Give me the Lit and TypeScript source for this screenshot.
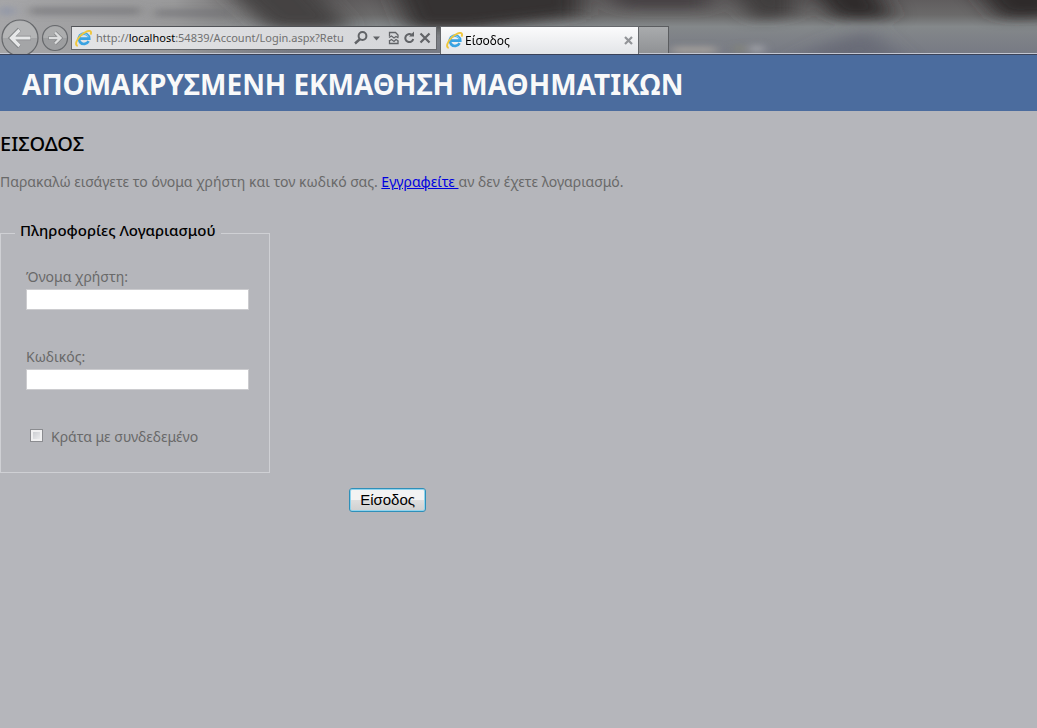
import { LitElement, html, css } from "lit";
import { customElement, property } from "lit/decorators.js";

const ieLogo = html`<svg width="17" height="17" viewBox="0 0 17 17" aria-hidden="true">
  <path d="M13.600 11.200a5.200 5.200 0 1 1 .6-2.600H5.200" fill="none" stroke="#3aa3e2" stroke-width="2.700"/>
  <path d="M13.400 7.200a5 5 0 0 0-9-1.200" fill="none" stroke="#8ad4f5" stroke-width="1"/>
  <path d="M2.800 15.800C-.6 15.400 1.400 9.600 5.800 5.400 10 1.600 14.600-.2 15.800 1.600c.4.8.2 2-.3 3" fill="none" stroke="#efc63c" stroke-width="1.900"/>
</svg>`;

@customElement("browser-bar")
export class BrowserBar extends LitElement {
  @property() pageTitle = "";

  static styles = css`
    :host { display: block; font-family: "Noto Sans", "Open Sans", sans-serif; font-size: 11px; }
    * { box-sizing: border-box; }
    .bar {
      position: relative;
      overflow: hidden;
      display: flex;
      align-items: flex-end;
      height: 55px;
      border-bottom: 1px solid #3a4258;
      box-shadow: inset 0 -1px #c3c7d2;
      background: #77797d;
    }
    .glass { position: absolute; inset: 0 0 2px 0; width: 100%; height: 53px; }
    .nav { position: relative; display: flex; align-items: center; width: 71px; height: 36px; flex: none; }
    .round { padding: 0; border: 0; background: none; display: block; line-height: 0; }
    .address {
      position: relative;
      display: flex;
      align-items: center;
      flex: none;
      width: 366px;
      height: 24px;
      margin-bottom: 4px;
      padding: 0 4px 0 3px;
      border: 1px solid #66686c;
      border-top-color: #505256;
      background: linear-gradient(90deg, #e3e4e6, #d4d5d8);
    }
    .url { flex: 1; margin-left: 4px; white-space: nowrap; color: #707070; line-height: 18px; }
    .url b { color: #000; font-weight: 400; }
    .tools { display: block; flex: none; }
    .tab {
      position: relative;
      display: flex;
      align-items: center;
      flex: none;
      width: 199px;
      height: 28px;
      margin-left: 3px;
      padding: 0 5px;
      border: 1px solid #66686c;
      border-bottom: 0;
      background: linear-gradient(#fbfbfc, #e3e5e8);
      color: #000;
    }
    .name { flex: 1; margin-left: 2px; font-size: 12px; line-height: 18px; }
    .fresh {
      position: relative;
      width: 30px;
      height: 27px;
      margin-bottom: 1px;
      padding: 0;
      border: 1px solid #5b5d60;
      border-left: 0;
      border-bottom: 0;
      border-radius: 0;
      background: linear-gradient(#a9abad, #909295);
    }
  `;

  render() {
    return html`<div class="bar">
      <svg class="glass" viewBox="0 0 1037 53" preserveAspectRatio="none" aria-hidden="true">
        <defs>
          <linearGradient id="v" x1="0" y1="0" x2="0" y2="1">
            <stop offset="0" stop-color="#605d5e"/><stop offset=".28" stop-color="#6b6a6a"/>
            <stop offset=".5" stop-color="#84888a"/><stop offset="1" stop-color="#777a84"/>
          </linearGradient>
          <linearGradient id="h" x1="0" x2="1">
            <stop offset="0" stop-color="#a6a6a8"/><stop offset=".6" stop-color="#99999a"/><stop offset="1" stop-color="#909091" stop-opacity="0"/>
          </linearGradient>
          <filter id="soft" x="-20%" y="-60%" width="140%" height="220%"><feGaussianBlur stdDeviation="12 6"/></filter>
          <filter id="fine" x="-20%" y="-60%" width="140%" height="220%"><feGaussianBlur stdDeviation="6 3"/></filter>
        </defs>
        <rect width="1037" height="53" fill="url(#v)"/>
        <rect width="290" height="53" fill="url(#h)"/>
        <g filter="url(#soft)">
          <path d="M222-14H312L350 28H270Z" fill="#444243"/>
          <path d="M390-20H580V15L470 28H410Z" fill="#353233"/>
          <path d="M600-18H710V8H620Z" fill="#444142"/>
          <path d="M725-18H795V14L755 20Z" fill="#403c3d"/>
          <path d="M805-18H870L892 18H835Z" fill="#2f2b2c"/>
          <path d="M870 30L905 62H790L830 42Z" fill="#626572" opacity=".7"/>
          <path d="M970-18H1060V16L1000 18Z" fill="#2f2b2c"/>
        </g>
        <g filter="url(#fine)" fill="none">
          <path d="M30 11H140M155 13H232" stroke="#6f7073" stroke-width="7" opacity=".7"/>
          <path d="M0 11H14" stroke="#8992a8" stroke-width="6"/>
          <path d="M672 50H716" stroke="#aaa59f" stroke-width="6"/>
          <path d="M736 49H744" stroke="#8c8c74" stroke-width="6"/>
          <path d="M752 49H762" stroke="#b0b1b6" stroke-width="7"/>
        </g>
      </svg>
      <div class="nav">
        <button class="round" aria-label="Πίσω">
          <svg width="40" height="36" viewBox="0 -1 40 36">
            <circle cx="20" cy="19" r="18" fill="#a4a5a7" stroke="#66686b" stroke-width="1.200"/>
            <path d="M3 19a17 17 0 0 1 34 0Z" fill="#b4b5b6"/>
            <path d="M31 19H12M19.500 10.500L11 19l8.500 8.500" fill="none" stroke="#838587" stroke-width="4.600"/>
            <path d="M30.500 19H12M19.500 11L11.500 19l8 8" fill="none" stroke="#e6e7e8" stroke-width="3.200"/>
          </svg>
        </button>
        <button class="round" aria-label="Εμπρός">
          <svg width="29" height="36" viewBox="0 -1 29 36">
            <circle cx="15" cy="19" r="12.500" fill="#9d9ea0" stroke="#67696c" stroke-width="1.200"/>
            <path d="M3.500 19a11.500 11.500 0 0 1 23 0Z" fill="#acadae"/>
            <path d="M8.500 19H20M15 13.500l5.500 5.500-5.500 5.500" fill="none" stroke="#808284" stroke-width="3.800"/>
            <path d="M9 19H20M15 13.500l5.500 5.500-5.500 5.500" fill="none" stroke="#dcddde" stroke-width="2.400"/>
          </svg>
        </button>
      </div>
      <div class="address">
        ${ieLogo}
        <span class="url">http://<b>localhost</b>:54839/Account/Login.aspx?Retu</span>
        <svg class="tools" width="78" height="18" viewBox="0 0 78 18" fill="none" stroke="#616367" aria-hidden="true">
          <circle cx="8.500" cy="7" r="3.900" stroke-width="2"/>
          <path d="M6 10L1 14.500" stroke-width="2.400"/>
          <path d="M19 7.500h7l-3.500 4Z" fill="#616367" stroke="none"/>
          <path d="M35.500 7.500V3.500h6l2.500 2.500v2M35.500 11.500v3h8.500V12" stroke-width="1.300"/>
          <path d="M35 8.500l2.500-1.500 2.500 2 2-1.500 2.500 1.500M35 12l2.500-1.500 2.500 2 2-2 2.500 1.500" stroke-width="1.200"/>
          <path d="M57.500 5.700A4 4 0 1 0 59.200 10" stroke-width="2"/>
          <path d="M55 7.500H60V2.500Z" fill="#616367" stroke="none"/>
          <path d="M66.500 4.500l9 9M75.500 4.500l-9 9" stroke-width="2.200"/>
        </svg>
      </div>
      <div class="tab">
        ${ieLogo}
        <span class="name">${this.pageTitle}</span>
        <svg width="9" height="9" viewBox="0 0 9 9" aria-hidden="true"><path d="M1 1l7 7M8 1L1 8" stroke="#929498" stroke-width="2.200"/></svg>
      </div>
      <button class="fresh" aria-label="Νέα καρτέλα"></button>
    </div>`;
  }
}

@customElement("login-form")
export class LoginForm extends LitElement {
  static styles = css`
    :host { display: block; color: #696969; }
    * { box-sizing: border-box; }
    .account {
      width: 270px;
      margin: 0;
      padding: 21px 20px 25px 25px;
      border: 1px solid #cfd0d4;
    }
    .legend { margin-left: -11px; padding: 0 5px 6px; color: #000; font-size: 15px; font-weight: 500; line-height: 20px; }
    .field { display: flex; flex-direction: column; gap: 2px; margin-bottom: 37px; line-height: 20px; }
    .box { width: 100%; height: 21px; padding: 0 3px; border: 1px solid #cccccf; background: #fff; font: inherit; }
    .keep { display: flex; align-items: center; gap: 8px; line-height: 20px; }
    .tick {
      appearance: none;
      width: 13px;
      height: 13px;
      margin: 0 0 4px 4px;
      border: 1px solid #8b8c90;
      background: linear-gradient(135deg, #c3c6cb, #f4f4f5);
      box-shadow: inset 0 0 0 2px #f0f0f1;
    }
    .tick:checked { background: #2a5c9a; }
    .actions { display: flex; width: 426px; justify-content: flex-end; padding-top: 15px; }
    .submit {
      height: 24px;
      padding: 0 10px;
      border: 1px solid #2f8fb8;
      border-radius: 3px;
      box-shadow: inset 0 0 0 1px #8fd4ee;
      background: linear-gradient(#f3f3f3 0 48%, #dedede 52%, #d0d0d0);
      color: #000;
      font: 15px "Liberation Sans", Arial, sans-serif;
      line-height: 20px;
    }
  `;

  render() {
    return html`<form @submit=${(e: Event) => e.preventDefault()}>
      <fieldset class="account">
        <legend class="legend">Πληροφορίες Λογαριασμού</legend>
        <div class="field">
          <label for="user">Όνομα χρήστη:</label>
          <input class="box" id="user" type="text" />
        </div>
        <div class="field">
          <label for="pass">Κωδικός:</label>
          <input class="box" id="pass" type="password" />
        </div>
        <div class="keep">
          <input class="tick" id="keep" type="checkbox" />
          <label for="keep">Κράτα με συνδεδεμένο</label>
        </div>
      </fieldset>
      <div class="actions"><button class="submit" type="submit">Είσοδος</button></div>
    </form>`;
  }
}

@customElement("app-root")
export class AppRoot extends LitElement {
  static styles = css`
    :host {
      display: block;
      min-height: 100vh;
      background: #b5b6bb;
      color: #696969;
      font-family: "Noto Sans", "Open Sans", sans-serif;
      font-size: 14px;
    }
    .banner { padding: 9px 22px 7px; background: #4b6c9e; }
    .site { margin: 0; color: #f9f9f9; font-size: 28px; font-weight: 700; line-height: 40px; }
    .heading { margin: 0; padding-top: 21px; color: #000; font-size: 20px; font-weight: 500; line-height: 24px; }
    .intro { margin: 0; padding: 16px 0 28px; line-height: 20px; }
    .link { color: #0000e0; }
  `;

  render() {
    return html`
      <browser-bar pageTitle="Είσοδος"></browser-bar>
      <header class="banner"><h1 class="site">ΑΠΟΜΑΚΡΥΣΜΕΝΗ ΕΚΜΑΘΗΣΗ ΜΑΘΗΜΑΤΙΚΩΝ</h1></header>
      <main>
        <h2 class="heading">ΕΙΣΟΔΟΣ</h2>
        <p class="intro">Παρακαλώ εισάγετε το όνομα χρήστη και τον κωδικό σας. <a class="link" href="#register">Εγγραφείτε </a>αν δεν έχετε λογαριασμό.</p>
        <login-form></login-form>
      </main>
    `;
  }
}
